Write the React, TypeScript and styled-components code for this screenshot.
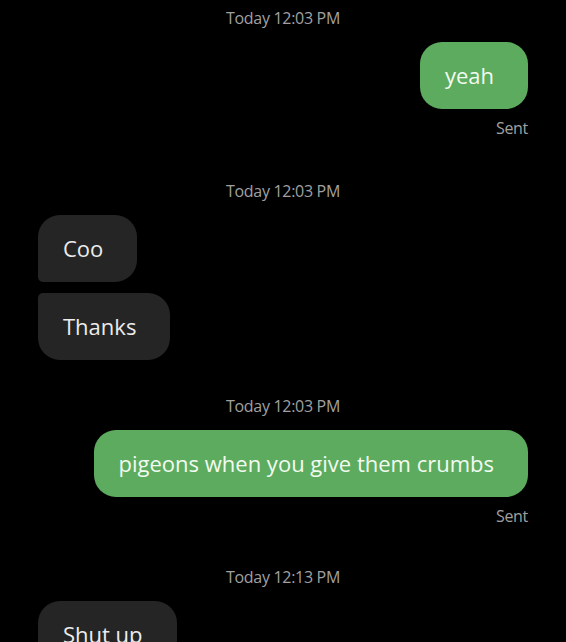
import React from "react";
import styled, { createGlobalStyle } from "styled-components";

const Global = createGlobalStyle`
  html, body {
    margin: 0;
    padding: 0;
    background: #000;
  }
  body {
    font-family: "Open Sans", "Noto Sans", sans-serif;
    overflow: hidden;
  }
`;

const Thread = styled.div`
  width: 566px;
  height: 642px;
  overflow: hidden;
  background: #000;
  display: flex;
  flex-direction: column;
  padding: 8px 38px 0 38px;
  box-sizing: border-box;
`;

const Stamp = styled.div<{ $top?: number }>`
  margin-top: ${(p) => p.$top ?? 0}px;
  height: 20px;
  line-height: 20px;
  text-align: center;
  font-size: 16px;
  color: #a0a0a0;
  letter-spacing: -0.3px;
`;

const Group = styled.div<{ $mine?: boolean }>`
  margin-top: 14px;
  display: flex;
  flex-direction: column;
  align-items: ${(p) => (p.$mine ? "flex-end" : "flex-start")};
  gap: 11px;
`;

type Pos = "single" | "first" | "last";

const Bubble = styled.div<{ $mine?: boolean; $pos?: Pos }>`
  height: 67px;
  box-sizing: border-box;
  display: flex;
  align-items: center;
  padding: 0 34px 1px 25px;
  font-size: 22px;
  color: ${(p) => (p.$mine ? "#f2fbf1" : "#ececec")};
  background: ${(p) => (p.$mine ? "#5dab5e" : "#252525")};
  border-radius: ${(p) =>
    p.$pos === "first"
      ? "22px 22px 22px 5px"
      : p.$pos === "last"
      ? "5px 22px 22px 22px"
      : "22px"};
  white-space: nowrap;
`;

const Status = styled.div`
  margin-top: 9px;
  height: 20px;
  line-height: 20px;
  text-align: right;
  font-size: 16px;
  color: #a0a0a0;
  letter-spacing: -0.3px;
`;

export default function App() {
  return (
    <>
      <Global />
      <Thread>
        <Stamp>Today 12:03 PM</Stamp>
        <Group $mine>
          <Bubble $mine>yeah</Bubble>
        </Group>
        <Status>Sent</Status>

        <Stamp $top={43}>Today 12:03 PM</Stamp>
        <Group>
          <Bubble $pos="first">Coo</Bubble>
          <Bubble $pos="last">Thanks</Bubble>
        </Group>

        <Stamp $top={36}>Today 12:03 PM</Stamp>
        <Group $mine>
          <Bubble $mine>pigeons when you give them crumbs</Bubble>
        </Group>
        <Status>Sent</Status>

        <Stamp $top={41}>Today 12:13 PM</Stamp>
        <Group>
          <Bubble>Shut up</Bubble>
        </Group>
      </Thread>
    </>
  );
}
